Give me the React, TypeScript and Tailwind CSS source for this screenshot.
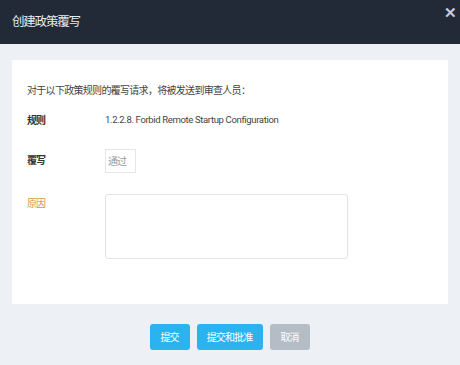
import React from 'react';

const font = { fontFamily: 'Roboto, "Noto Sans CJK SC", sans-serif' };

const App = () => {
    return (
        <div className="w-[460px] h-[365px] bg-[#edf0f5] flex flex-col" style={font}>
            <div className="h-[44px] bg-[#222a38] flex items-center justify-between pl-3 pr-[3px] shrink-0">
                <span className="text-[12.5px] text-[#e8ebef] tracking-[-1.2px]">创建政策覆写</span>
                <span className="text-[#c8ccd2] text-[15px] font-black self-start mt-[6px] leading-none">✕</span>
            </div>

            <div className="mx-3 mt-4 bg-white h-[244px] px-[15px] pt-[24px]">
                <p className="text-[10px] text-[#444] leading-[14px] tracking-[-0.7px]">对于以下政策规则的覆写请求，将被发送到审查人员：</p>

                <div className="flex items-center mt-[15px]">
                    <span className="w-[78px] text-[10px] font-bold text-[#333] tracking-[-0.9px]">规则</span>
                    <span className="text-[9.5px] text-[#444] tracking-[-0.35px]">1.2.2.8. Forbid Remote Startup Configuration</span>
                </div>

                <div className="flex items-center mt-[21px]">
                    <span className="w-[78px] text-[10px] font-bold text-[#333] tracking-[-0.9px] -mt-[2px]">覆写</span>
                    <div className="w-[31px] h-[24px] border border-[#e6e6e6] flex items-center pl-[2px]">
                        <span className="text-[10px] text-[#999] tracking-[-0.9px]">通过</span>
                    </div>
                </div>

                <div className="flex items-start mt-[21px]">
                    <span className="w-[78px] text-[10px] text-[#d49a3e] tracking-[-0.9px] mt-[2px]">原因</span>
                    <textarea className="w-[243px] h-[65px] border border-[#e2e4e8] rounded-[3px] resize-none outline-none" />
                </div>
            </div>

            <div className="flex justify-center gap-[7px] mt-[20px] pr-[1px]">
                <button className="w-[40px] h-[26px] rounded-[3px] bg-[#2bb3f1] text-white text-[10px] tracking-[-0.9px]">提交</button>
                <button className="w-[66px] h-[26px] rounded-[3px] bg-[#2bb3f1] text-white text-[10px] tracking-[-0.9px]">提交和批准</button>
                <button className="w-[40px] h-[26px] rounded-[3px] bg-[#b4bcc5] text-white text-[10px] tracking-[-0.9px]">取消</button>
            </div>
        </div>
    );
};

export default App;
